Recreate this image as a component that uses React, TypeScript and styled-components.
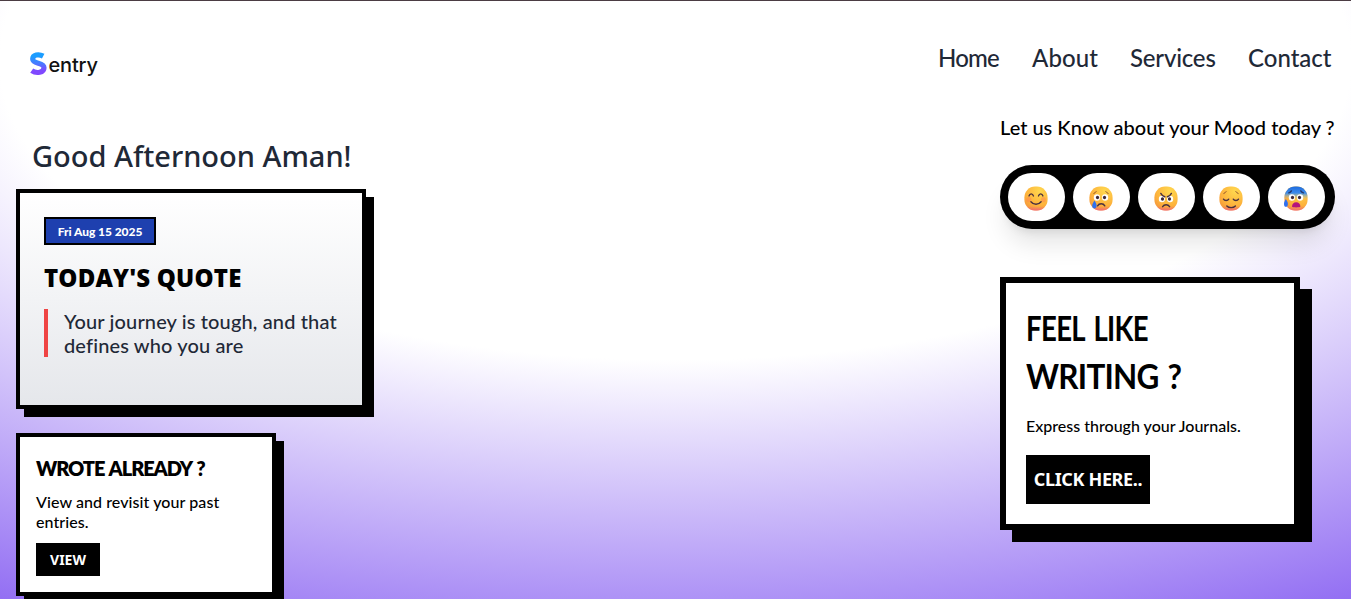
import React from "react";
import styled, { createGlobalStyle } from "styled-components";

const GlobalStyle = createGlobalStyle`
  *, *::before, *::after { box-sizing: border-box; }
  html, body { margin: 0; padding: 0; height: 599px; overflow: hidden; }
  h1, h2, h3, p { margin: 0; font-weight: inherit; }
  button { font: inherit; border: 0; padding: 0; }
`;

const rounded = `Lato, "Liberation Sans", sans-serif`;
const humanist = `"Noto Sans", "Open Sans", sans-serif`;

const Page = styled.div`
  height: 599px;
  overflow: hidden;
  border-top: 1px solid #4b3c43;
  background: radial-gradient(125% 125% at 50% 10%, #fff 40%, #6633ee 100%);
  font-family: ${rounded};
  color: #000;
`;

const Header = styled.header`
  display: flex;
  justify-content: space-between;
  height: 108px;
  padding: 41px 20px 0 29px;
`;

const Logo = styled.svg`
  display: block;
  width: 76px;
  height: 40px;
  margin-top: 3px;
`;

const Nav = styled.nav`
  display: flex;
  gap: 32px;
`;

const NavLink = styled.a<{ $width: number; $tracking: number }>`
  width: ${(p) => p.$width}px;
  white-space: nowrap;
  font-size: 24px;
  line-height: 32px;
  font-weight: 500;
  letter-spacing: ${(p) => p.$tracking}px;
  color: #1f2937;
`;

const Main = styled.main`
  display: flex;
  justify-content: space-between;
  padding: 0 16px;
`;

const Left = styled.section`
  width: 358px;
  padding-top: 27px;
`;

const Greeting = styled.h1`
  margin: 0 0 13px 16px;
  font-family: ${humanist};
  font-size: 29px;
  line-height: 40px;
  font-weight: 500;
  letter-spacing: -0.02px;
  white-space: nowrap;
  color: #1f2937;
`;

const Card = styled.article<{ $w: number; $h: number; $border: number; $pad: string; $drop: number }>`
  width: ${(p) => p.$w}px;
  height: ${(p) => p.$h}px;
  padding: ${(p) => p.$pad};
  border: ${(p) => p.$border}px solid #000;
  background: #fff;
  box-shadow: ${(p) => `${p.$drop}px ${p.$drop}px 0 #000`};
`;

const QuoteCard = styled(Card)`
  margin-bottom: 24px;
  background: linear-gradient(#fff, #e5e7eb);
`;

const DateTag = styled.div`
  width: 112px;
  height: 28px;
  border: 2px solid #000;
  background: #1e40af;
  color: #fff;
  font-size: 12px;
  line-height: 26px;
  font-weight: 900;
  letter-spacing: -0.05px;
  text-align: center;
  white-space: nowrap;
`;

const QuoteTitle = styled.h2`
  margin: 17px 0 15px;
  font-family: "Open Sans", "Noto Sans", sans-serif;
  font-size: 24px;
  line-height: 32px;
  font-weight: 800;
  letter-spacing: 0.18px;
  white-space: nowrap;
`;

const Quote = styled.p`
  height: 48px;
  padding-left: 16px;
  border-left: 4px solid #ef4444;
  font-size: 20px;
  line-height: 24px;
  font-weight: 500;
  white-space: nowrap;
  letter-spacing: 0.13px;
  color: #1f2937;
`;

const SmallTitle = styled.h3`
  font-size: 20px;
  line-height: 24px;
  font-weight: 800;
  letter-spacing: -1.1px;
  word-spacing: 1.5px;
  white-space: nowrap;
`;

const Body = styled.p<{ $top: number; $tracking?: number }>`
  margin-top: ${(p) => p.$top}px;
  font-size: 16px;
  line-height: 20px;
  font-weight: 500;
  letter-spacing: ${(p) => p.$tracking ?? 0}px;
  white-space: nowrap;
`;

const Button = styled.button<{ $w: number; $h: number; $size: number; $top: number; $tracking?: number }>`
  display: block;
  width: ${(p) => p.$w}px;
  height: ${(p) => p.$h}px;
  margin-top: ${(p) => p.$top}px;
  padding-bottom: 1px;
  background: #000;
  color: #fff;
  font-family: ${humanist};
  font-size: ${(p) => p.$size}px;
  font-weight: 700;
  letter-spacing: ${(p) => p.$tracking ?? 0}px;
  white-space: nowrap;
`;

const Right = styled.aside`
  width: 335px;
  padding-top: 3px;
`;

const MoodTitle = styled.h2`
  font-size: 20px;
  line-height: 30px;
  font-weight: 500;
  white-space: nowrap;
`;

const MoodBar = styled.div`
  display: flex;
  gap: 8px;
  height: 64px;
  margin: 23px 0 48px;
  padding: 8px;
  border-radius: 32px;
  background: #000;
  box-shadow: 0 20px 25px -5px rgba(0, 0, 0, 0.1), 0 8px 10px -6px rgba(0, 0, 0, 0.1);
`;

const MoodButton = styled.button`
  display: flex;
  justify-content: center;
  width: 57px;
  height: 48px;
  padding: 13px 1px 0 0;
  border-radius: 24px;
  background: #fff;
`;

const Face = styled.svg`
  display: block;
  width: 24px;
  height: 25px;
`;

const BigTitle = styled.h2`
  font-size: 34px;
  line-height: 48px;
  font-weight: 700;
  letter-spacing: -0.8px;
  white-space: nowrap;
`;

const TitleLine = styled.span<{ $stretch: number; $gap: number }>`
  display: block;
  word-spacing: ${(p) => p.$gap}px;
  transform: scaleX(${(p) => p.$stretch});
  transform-origin: left center;
`;

type Mood = "happy" | "sad" | "angry" | "calm" | "anxious";

const line = { fill: "none", stroke: "#4a3040", strokeWidth: 1.4, strokeLinecap: "round" as const, strokeLinejoin: "round" as const };

function Eyes({ y }: { y: number }) {
  return (
    <>
      <circle cx="7.9" cy={y} r="3.1" fill="#fff" />
      <circle cx="16.1" cy={y} r="3.1" fill="#fff" />
      <circle cx="8.5" cy={y} r="1.6" fill="#3b2838" />
      <circle cx="15.5" cy={y} r="1.6" fill="#3b2838" />
    </>
  );
}

function MoodFace({ mood }: { mood: Mood }) {
  const base = `face-${mood}`;
  return (
    <Face viewBox="0 0 24 24" preserveAspectRatio="none" role="img" aria-label={mood}>
      <defs>
        <radialGradient id={base} cx="0.66" cy="0.2" r="1">
          <stop offset="0" stopColor="#ffd84e" />
          <stop offset="0.6" stopColor="#fdb23c" />
          <stop offset="0.9" stopColor="#f3923c" />
          <stop offset="1" stopColor="#ea7a55" />
        </radialGradient>
        <linearGradient id={`${base}-rim`} x1="0" y1="0" x2="0" y2="1">
          <stop offset="0.82" stopColor="#f0568c" stopOpacity="0" />
          <stop offset="1" stopColor="#f0568c" stopOpacity="0.7" />
        </linearGradient>
        <linearGradient id={`${base}-cold`} x1="0" y1="0" x2="0" y2="1">
          <stop offset="0" stopColor="#1d6be0" />
          <stop offset="0.27" stopColor="#3b8bea" />
          <stop offset="0.52" stopColor="#8fbcd0" stopOpacity="0" />
        </linearGradient>
      </defs>
      <rect x="0.4" y="0.5" width="23.2" height="23" rx="10.6" fill={`url(#${base})`} />
      <rect x="0.4" y="0.5" width="23.2" height="23" rx="10.6" fill={`url(#${base}-rim)`} />
      {mood === "happy" && (
        <>
          <circle cx="4.8" cy="13" r="2.5" fill="#ff7657" opacity="0.4" />
          <circle cx="19.4" cy="13" r="2.5" fill="#ff7657" opacity="0.4" />
          <path {...line} d="M5 9.500c.8-2.600 3.600-2.600 4.400 0M14.500 9.500c.8-2.600 3.600-2.600 4.400 0M6.900 15.200c2.800 3.200 7.400 3.200 10.200 0" />
        </>
      )}
      {mood === "sad" && (
        <>
          <Eyes y={11} />
          <path {...line} d="M8.6 19c1.5-2.6 5.7-2.6 7.2 0" />
          <path {...line} stroke="#8a4b29" strokeWidth={0.9} d="M4.8 7.2c1-.4 1.9-1 2.4-1.9M19.2 7.2c-1-.4-1.900-1-2.400-1.900" />
          <path fill="#2f70ee" d="M5.500 14c1.400 2.200 2.100 3.500 2.100 5 0 1.600-.9 2.600-2.200 2.600s-2.200-1-2.200-2.600c0-1.500.9-2.800 2.300-5Z" />
        </>
      )}
      {mood === "angry" && (
        <>
          <Eyes y={12.5} />
          <path {...line} d="M6.800 7.100c1 1.900 2.200 2.700 4 3.200M17.400 7.100c-1 1.900-2.200 2.700-4 3.200M8.600 19.800c1.600-2.500 5.400-2.500 7 0" />
        </>
      )}
      {mood === "calm" && (
        <>
          <path {...line} d="M4.500 12.700c1 1.700 4.200 1.700 5.200 0M14.300 12.700c1 1.700 4.200 1.700 5.200 0M7.800 19.200c2.100 2.100 6.500 2.100 8.600 0" />
          <path {...line} stroke="#8a4b29" strokeWidth={0.9} d="M4.800 7.200c1-.4 1.900-1 2.400-1.900M19.200 7.200c-1-.4-1.900-1-2.400-1.900" />
        </>
      )}
      {mood === "anxious" && (
        <>
          <rect x="0.4" y="0.5" width="23.2" height="23" rx="10.6" fill={`url(#${base}-cold)`} />
          <Eyes y={11} />
          <path {...line} stroke="#26386b" d="M4.800 6.600c1.100-.3 2-.9 2.600-1.900M19.400 6.600c-1.100-.3-2-.9-2.600-1.900" />
          <path fill="#b4127d" d="M8 20c0-2.700 1.800-4.300 4.200-4.300s4.200 1.600 4.200 4.300c0 .7-8.400.7-8.400 0Z" />
          <path fill="#2f70ee" d="M1.800 12.500c1.500 1.900 2.100 3.300 2.100 4.700 0 1.800-.9 2.800-2 2.800S0 19 0 17.200c0-1.400.5-2.800 1.800-4.700Z" />
        </>
      )}
    </Face>
  );
}

function SentryLogo() {
  return (
    <Logo viewBox="0 0 76 40" role="img" aria-label="Sentry">
      <defs>
        <linearGradient id="logo-s" x1="0" y1="0" x2="0" y2="1">
          <stop offset="0.1" stopColor="#1b9dff" />
          <stop offset="0.5" stopColor="#4b78ff" />
          <stop offset="0.9" stopColor="#8048ff" />
        </linearGradient>
      </defs>
      <path
        d="M14.200 11.100C9.600 8.600 3.700 9.800 3.700 14c0 5.500 11.300 3 11.300 8.700 0 5-7.600 6.200-12.300 3"
        fill="none"
        stroke="url(#logo-s)"
        strokeWidth="5.2"
        strokeLinejoin="round"
      />
      <text x="19.500" y="27" fill="#111" fontFamily="Inter, sans-serif" fontSize="20" fontWeight="550" textLength="49.500">entry</text>
    </Logo>
  );
}

const links = [
  { label: "Home", width: 62, tracking: -0.8 },
  { label: "About", width: 66, tracking: 0.1 },
  { label: "Services", width: 86, tracking: -0.2 },
  { label: "Contact", width: 83, tracking: 0 },
];

const moods: Mood[] = ["happy", "sad", "angry", "calm", "anxious"];

export default function App() {
  return (
    <>
      <GlobalStyle />
      <Page>
        <Header>
          <SentryLogo />
          <Nav>
            {links.map((l) => (
              <NavLink key={l.label} $width={l.width} $tracking={l.tracking}>{l.label}</NavLink>
            ))}
          </Nav>
        </Header>
        <Main>
          <Left>
            <Greeting>Good Afternoon Aman!</Greeting>
            <QuoteCard $w={350} $h={220} $border={4} $pad="24px" $drop={8}>
              <DateTag>Fri Aug 15 2025</DateTag>
              <QuoteTitle>TODAY'S QUOTE</QuoteTitle>
              <Quote>Your journey is tough, and that<br />defines who you are</Quote>
            </QuoteCard>
            <Card $w={260} $h={163} $border={4} $pad="19px 16px" $drop={8}>
              <SmallTitle>WROTE ALREADY ?</SmallTitle>
              <Body $top={12} $tracking={0.08}>View and revisit your past<br />entries.</Body>
              <Button $w={64} $h={33} $size={14} $top={11}>VIEW</Button>
            </Card>
          </Left>
          <Right>
            <MoodTitle>Let us Know about your Mood today ?</MoodTitle>
            <MoodBar>
              {moods.map((m) => (
                <MoodButton key={m}><MoodFace mood={m} /></MoodButton>
              ))}
            </MoodBar>
            <Card $w={300} $h={253} $border={6} $pad="21px 20px" $drop={12}>
              <BigTitle>
                <TitleLine $stretch={0.81} $gap={4}>FEEL LIKE</TitleLine>
                <TitleLine $stretch={0.925} $gap={2}>WRITING ?</TitleLine>
              </BigTitle>
              <Body $top={16}>Express through your Journals.</Body>
              <Button $w={124} $h={49} $size={18} $top={19} $tracking={-0.35}>CLICK HERE..</Button>
            </Card>
          </Right>
        </Main>
      </Page>
    </>
  );
}
